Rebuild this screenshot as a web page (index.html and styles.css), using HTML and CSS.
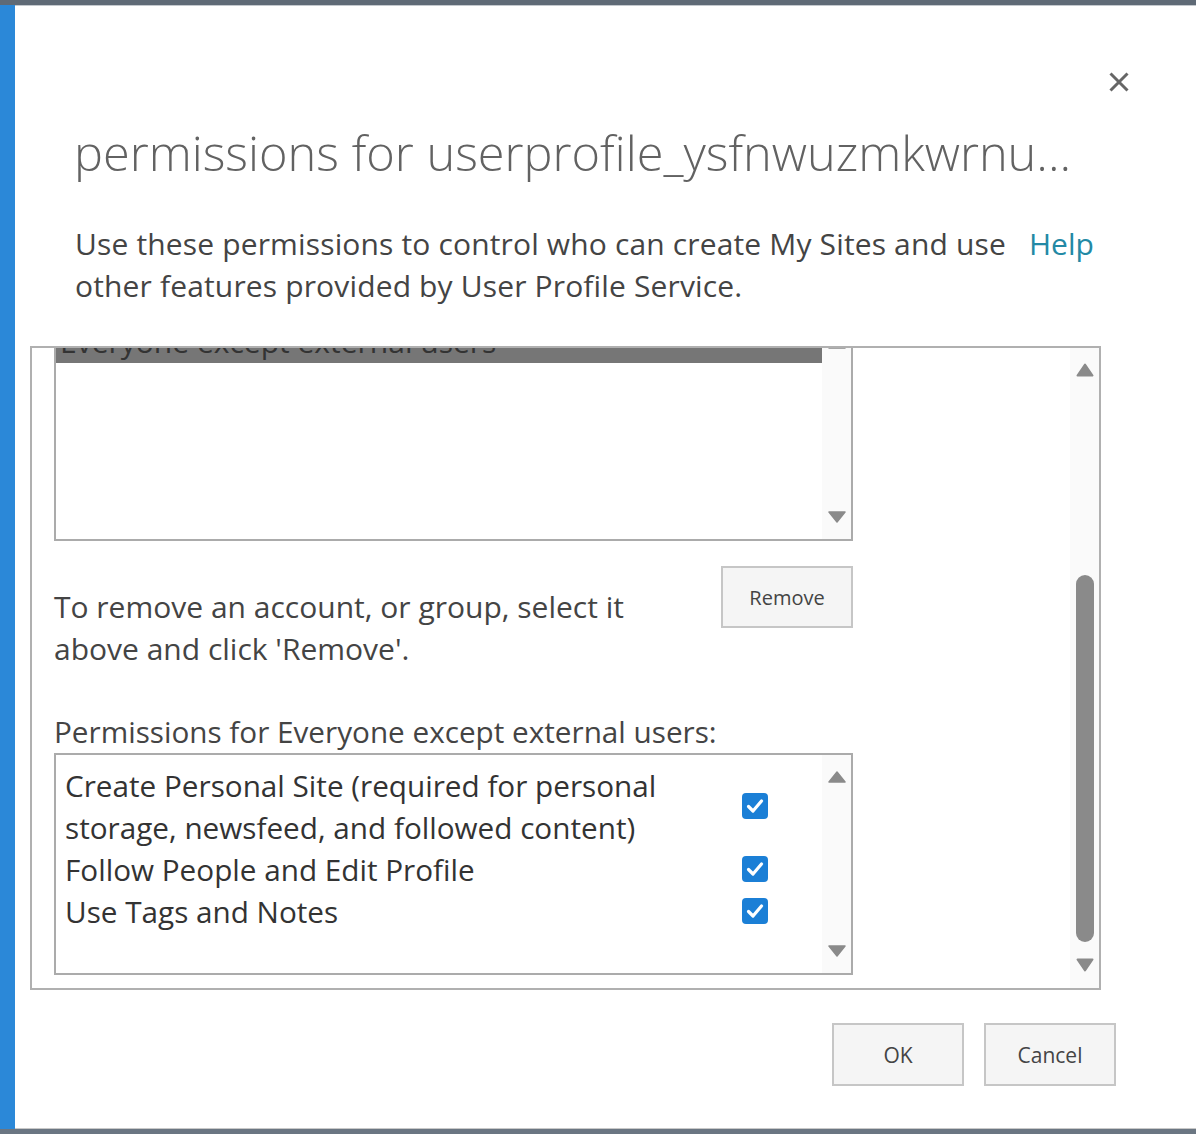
FILE: index.html
```html
<!DOCTYPE html>
<html lang="en">
<head>
    <meta charset="UTF-8">
    <meta name="viewport" content="width=device-width, initial-scale=1.0">
    <title>Permissions for User Profile Service</title>
    <link rel="stylesheet" href="styles.css">
</head>
<body>

<div class="dialog">
    <div class="accent"></div>
    <div class="main">
        <div class="close-row">
            <button class="close-btn" title="Close">
                <svg width="22" height="22" viewBox="0 0 22 22"><path d="M2.5 2.5 L19.5 19.5 M19.5 2.5 L2.5 19.5" stroke="#666" stroke-width="3" fill="none"/></svg>
            </button>
        </div>

        <h1 class="title">permissions for userprofile_ysfnwuzmkwrnu...</h1>

        <div class="intro">
            <p>Use these permissions to control who can create My Sites and use other features provided by User Profile Service.</p>
            <a href="#" class="help">Help</a>
        </div>

        <div class="panel">
            <div class="panel-body">
                <div class="listbox accounts">
                    <div class="list-items">
                        <div class="list-item selected">Everyone except external users</div>
                    </div>
                    <div class="mini-scroll">
                        <svg class="arrow" width="18" height="12" viewBox="0 0 18 12"><path d="M9 1 L17 11 L1 11 Z" fill="#8a8a8a" stroke="#8a8a8a" stroke-width="1.5" stroke-linejoin="round"/></svg>
                        <svg class="arrow" width="18" height="12" viewBox="0 0 18 12"><path d="M1 1 L17 1 L9 11 Z" fill="#8a8a8a" stroke="#8a8a8a" stroke-width="1.5" stroke-linejoin="round"/></svg>
                    </div>
                </div>

                <div class="remove-row">
                    <p class="hint">To remove an account, or group, select it above and click 'Remove'.</p>
                    <button class="btn btn-remove">Remove</button>
                </div>

                <div class="perm-label">Permissions for Everyone except external users:</div>

                <div class="listbox perms">
                    <div class="perm-grid">
                        <div class="perm-name">Create Personal Site (required for personal storage, newsfeed, and followed content)</div>
                        <span class="check"><svg width="26" height="26" viewBox="0 0 26 26"><path d="M6.5 13.5 L11 18 L19.5 8" stroke="#fff" stroke-width="3.2" fill="none" stroke-linecap="round" stroke-linejoin="round"/></svg></span>
                        <div class="perm-name">Follow People and Edit Profile</div>
                        <span class="check"><svg width="26" height="26" viewBox="0 0 26 26"><path d="M6.5 13.5 L11 18 L19.5 8" stroke="#fff" stroke-width="3.2" fill="none" stroke-linecap="round" stroke-linejoin="round"/></svg></span>
                        <div class="perm-name">Use Tags and Notes</div>
                        <span class="check"><svg width="26" height="26" viewBox="0 0 26 26"><path d="M6.5 13.5 L11 18 L19.5 8" stroke="#fff" stroke-width="3.2" fill="none" stroke-linecap="round" stroke-linejoin="round"/></svg></span>
                    </div>
                    <div class="mini-scroll">
                        <svg class="arrow" width="18" height="12" viewBox="0 0 18 12"><path d="M9 1 L17 11 L1 11 Z" fill="#8a8a8a" stroke="#8a8a8a" stroke-width="1.5" stroke-linejoin="round"/></svg>
                        <svg class="arrow" width="18" height="12" viewBox="0 0 18 12"><path d="M1 1 L17 1 L9 11 Z" fill="#8a8a8a" stroke="#8a8a8a" stroke-width="1.5" stroke-linejoin="round"/></svg>
                    </div>
                </div>
            </div>

            <div class="vscroll">
                <svg width="18" height="14" viewBox="0 0 18 14"><path d="M9 1.5 L16.5 12.5 L1.5 12.5 Z" fill="#8a8a8a" stroke="#8a8a8a" stroke-width="2" stroke-linejoin="round"/></svg>
                <div class="thumb"></div>
                <svg width="18" height="14" viewBox="0 0 18 14"><path d="M1.5 1.5 L16.5 1.5 L9 12.5 Z" fill="#8a8a8a" stroke="#8a8a8a" stroke-width="2" stroke-linejoin="round"/></svg>
            </div>
        </div>

        <div class="actions">
            <button class="btn">OK</button>
            <button class="btn">Cancel</button>
        </div>
    </div>
</div>

</body>
</html>
```

FILE: styles.css
```css
/* Dialog frame */
body {
    margin: 0;
    padding: 0;
    background-color: #ffffff;
    font-family: "Open Sans", "Noto Sans", Arial, sans-serif;
    color: #444444;
    overflow: hidden;
}
.dialog {
    display: flex;
    height: 1124px;
    border-top: 5px solid #5f6a76;
    border-bottom: 5px solid #6b7682;
    box-shadow: inset 0 1px 0 #c4c9ce, inset 0 -1px 0 #c8c8c8;
}
.accent {
    width: 15px;
    flex: none;
    background-color: #2b88d8;
}
.main {
    flex: 1;
    display: flex;
    flex-direction: column;
}

/* Header */
.close-row {
    display: flex;
    justify-content: flex-end;
    padding: 65px 65px 0 0;
}
.close-btn {
    width: 24px;
    height: 24px;
    padding: 1px;
    border: none;
    background: none;
    cursor: pointer;
}
.title {
    margin: 26px 0 0 59px;
    font-size: 48.7px;
    font-weight: 300;
    line-height: 64px;
    color: #626262;
    white-space: nowrap;
}
.intro {
    display: flex;
    align-items: flex-start;
    margin: 39px 0 0 60px;
}
.intro p {
    width: 942px;
    margin: 0;
    font-size: 30px;
    letter-spacing: 0.15px;
    line-height: 42px;
    color: #444444;
}
.help {
    margin-left: 12px;
    font-size: 30px;
    line-height: 42px;
    color: #2389a5;
    text-decoration: none;
}

/* Scrolling panel */
.panel {
    display: flex;
    width: 1071px;
    height: 644px;
    margin: 39px 0 0 15px;
    box-sizing: border-box;
    border: 2px solid #b0b0b0;
}
.panel-body {
    flex: 1;
    overflow: hidden;
    padding-left: 22px;
}
.vscroll {
    width: 29px;
    flex: none;
    display: flex;
    flex-direction: column;
    align-items: center;
    padding: 15px 0 16px;
    background-color: #fafafa;
}
.thumb {
    width: 18px;
    height: 367px;
    margin: auto 0 16px;
    border-radius: 9px;
    background-color: #8a8a8a;
}

/* List boxes */
.listbox {
    display: flex;
    width: 799px;
    height: 222px;
    box-sizing: border-box;
    border: 2px solid #ababab;
}
.accounts {
    margin-top: -29px;
}
.list-items {
    flex: 1;
}
.list-item {
    padding-left: 4px;
    font-size: 30px;
    line-height: 42px;
    color: #333333;
}
.list-item.selected {
    background-color: #767676;
}
.mini-scroll {
    width: 29px;
    flex: none;
    display: flex;
    flex-direction: column;
    justify-content: space-between;
    align-items: center;
    padding: 16px 0;
    box-sizing: border-box;
    background-color: #fafafa;
}
.arrow {
    display: block;
}

.remove-row {
    display: flex;
    justify-content: space-between;
    align-items: flex-start;
    width: 799px;
    margin-top: 25px;
}
.hint {
    width: 640px;
    margin: 20px 0 0;
    font-size: 30px;
    line-height: 42px;
}
.perm-label {
    margin-top: 41px;
    font-size: 29.7px;
    line-height: 42px;
}
.perms .perm-grid {
    flex: 1;
    display: grid;
    grid-template-columns: 662px 26px;
    column-gap: 15px;
    align-items: center;
    align-content: start;
    padding: 10px 0 0 9px;
}
.perm-name {
    font-size: 29.7px;
    line-height: 42px;
    color: #333333;
}
.check {
    display: block;
    width: 26px;
    height: 26px;
    margin-top: -3px;
    border-radius: 4px;
    background-color: #1b7fd6;
}
.check svg {
    display: block;
}

/* Buttons */
.btn {
    width: 132px;
    height: 63px;
    padding: 0;
    border: 2px solid #c6c6c6;
    background-color: #f5f5f5;
    font-family: "Open Sans", "Noto Sans", Arial, sans-serif;
    font-size: 21px;
    color: #444444;
    cursor: pointer;
}
.btn-remove {
    height: 62px;
    font-size: 20px;
}
.actions {
    display: flex;
    justify-content: flex-end;
    gap: 20px;
    margin-top: 33px;
    padding-right: 80px;
}
```
